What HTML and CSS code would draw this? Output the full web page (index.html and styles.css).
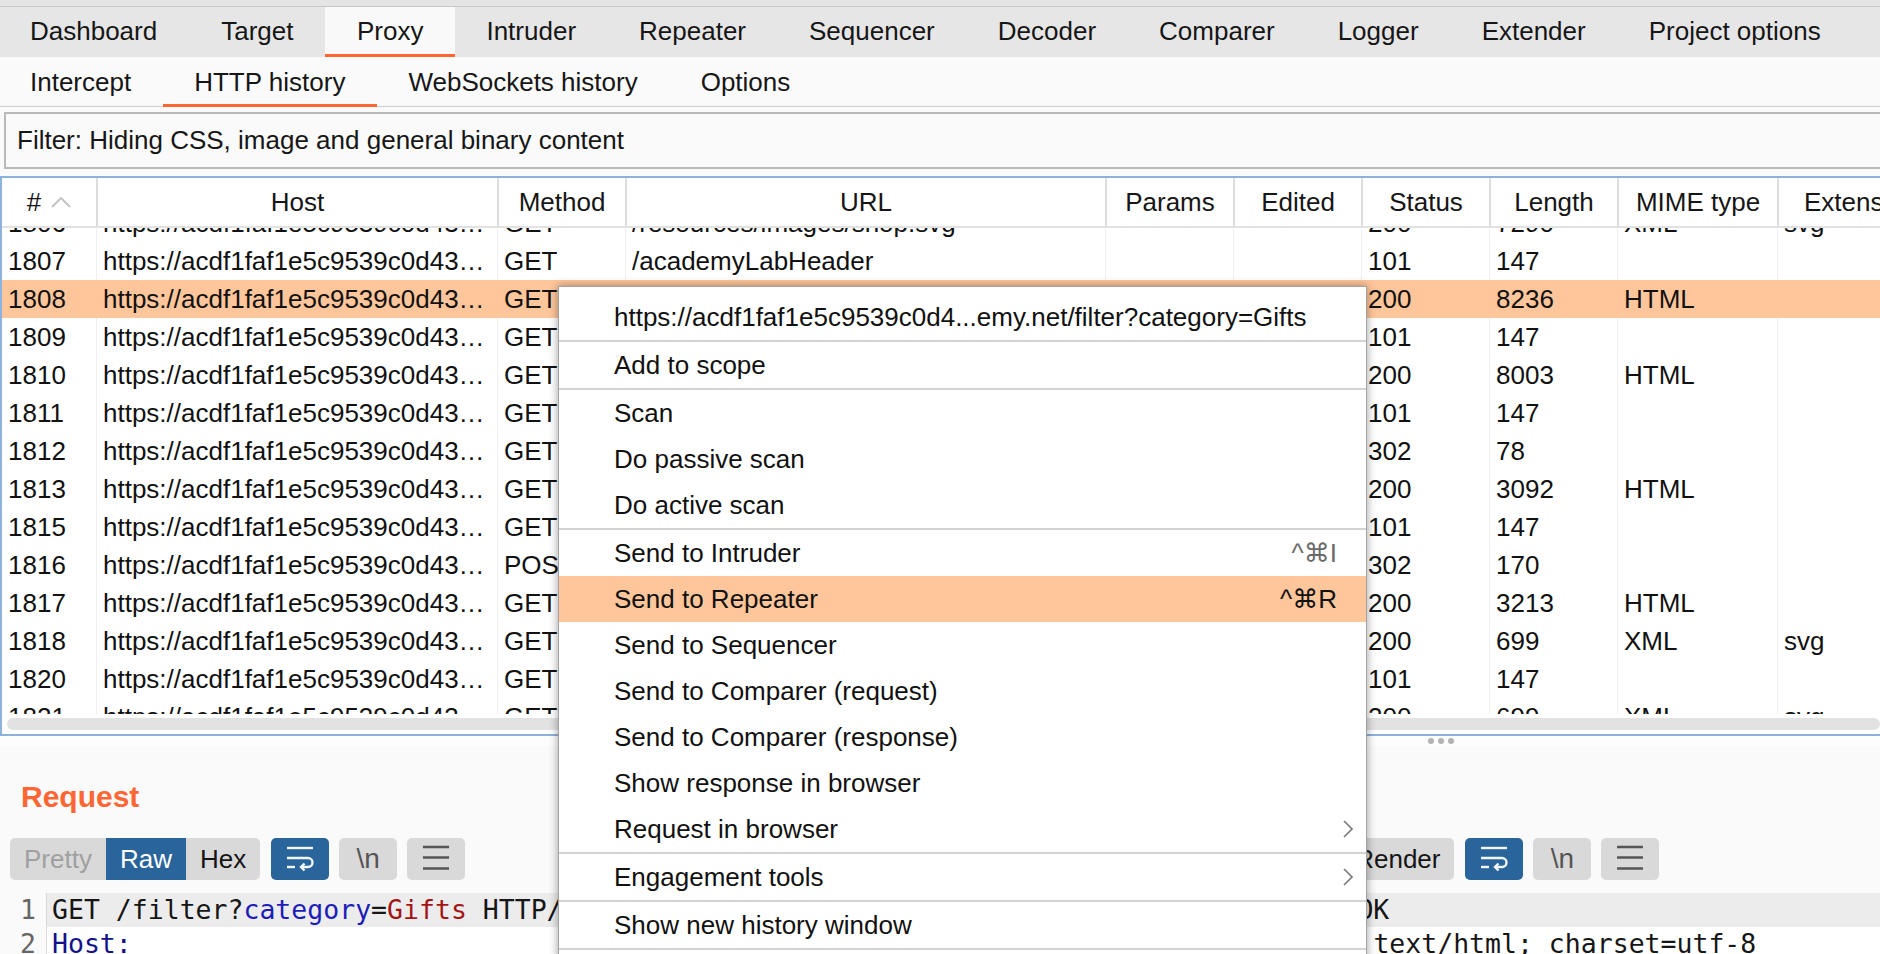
FILE: index.html
```html
<!DOCTYPE html>
<html>
<head>
<meta charset="utf-8">
<title>Burp Suite - Proxy HTTP history</title>
<link rel="stylesheet" href="styles.css">
</head>
<body>
<div class="topstrip"></div>
<nav class="tabs">
  <span class="tab">Dashboard</span>
  <span class="tab">Target</span>
  <span class="tab active">Proxy</span>
  <span class="tab">Intruder</span>
  <span class="tab">Repeater</span>
  <span class="tab">Sequencer</span>
  <span class="tab">Decoder</span>
  <span class="tab">Comparer</span>
  <span class="tab">Logger</span>
  <span class="tab">Extender</span>
  <span class="tab">Project options</span>
</nav>
<nav class="subtabs">
  <span class="subtab">Intercept</span>
  <span class="subtab active">HTTP history</span>
  <span class="subtab">WebSockets history</span>
  <span class="subtab">Options</span>
</nav>
<div class="filter">Filter: Hiding CSS, image and general binary content</div>

<section class="history">
  <div class="grid thead">
    <div class="c"><span>#</span><svg class="sort" width="20" height="11" viewBox="0 0 20 11"><polyline points="1,10 10,1 19,10" fill="none" stroke="#c4c4c4" stroke-width="2"/></svg></div>
    <div class="c">Host</div>
    <div class="c">Method</div>
    <div class="c">URL</div>
    <div class="c">Params</div>
    <div class="c">Edited</div>
    <div class="c">Status</div>
    <div class="c">Length</div>
    <div class="c">MIME type</div>
    <div class="c">Extension</div>
  </div>
  <div class="tbody">
    <div class="rows">
      <div class="grid row"><div class="c">1806</div><div class="c">https://acdf1faf1e5c9539c0d43…</div><div class="c">GET</div><div class="c">/resources/images/shop.svg</div><div class="c"></div><div class="c"></div><div class="c">200</div><div class="c">7290</div><div class="c">XML</div><div class="c">svg</div></div>
      <div class="grid row"><div class="c">1807</div><div class="c">https://acdf1faf1e5c9539c0d43…</div><div class="c">GET</div><div class="c">/academyLabHeader</div><div class="c"></div><div class="c"></div><div class="c">101</div><div class="c">147</div><div class="c"></div><div class="c"></div></div>
      <div class="grid row sel"><div class="c">1808</div><div class="c">https://acdf1faf1e5c9539c0d43…</div><div class="c">GET</div><div class="c">/filter?category=Gifts</div><div class="c"></div><div class="c"></div><div class="c">200</div><div class="c">8236</div><div class="c">HTML</div><div class="c"></div></div>
      <div class="grid row"><div class="c">1809</div><div class="c">https://acdf1faf1e5c9539c0d43…</div><div class="c">GET</div><div class="c">/academyLabHeader</div><div class="c"></div><div class="c"></div><div class="c">101</div><div class="c">147</div><div class="c"></div><div class="c"></div></div>
      <div class="grid row"><div class="c">1810</div><div class="c">https://acdf1faf1e5c9539c0d43…</div><div class="c">GET</div><div class="c">/filter?category=Pets</div><div class="c"></div><div class="c"></div><div class="c">200</div><div class="c">8003</div><div class="c">HTML</div><div class="c"></div></div>
      <div class="grid row"><div class="c">1811</div><div class="c">https://acdf1faf1e5c9539c0d43…</div><div class="c">GET</div><div class="c">/academyLabHeader</div><div class="c"></div><div class="c"></div><div class="c">101</div><div class="c">147</div><div class="c"></div><div class="c"></div></div>
      <div class="grid row"><div class="c">1812</div><div class="c">https://acdf1faf1e5c9539c0d43…</div><div class="c">GET</div><div class="c">/my-account</div><div class="c"></div><div class="c"></div><div class="c">302</div><div class="c">78</div><div class="c"></div><div class="c"></div></div>
      <div class="grid row"><div class="c">1813</div><div class="c">https://acdf1faf1e5c9539c0d43…</div><div class="c">GET</div><div class="c">/login</div><div class="c"></div><div class="c"></div><div class="c">200</div><div class="c">3092</div><div class="c">HTML</div><div class="c"></div></div>
      <div class="grid row"><div class="c">1815</div><div class="c">https://acdf1faf1e5c9539c0d43…</div><div class="c">GET</div><div class="c">/academyLabHeader</div><div class="c"></div><div class="c"></div><div class="c">101</div><div class="c">147</div><div class="c"></div><div class="c"></div></div>
      <div class="grid row"><div class="c">1816</div><div class="c">https://acdf1faf1e5c9539c0d43…</div><div class="c">POST</div><div class="c">/login</div><div class="c"></div><div class="c"></div><div class="c">302</div><div class="c">170</div><div class="c"></div><div class="c"></div></div>
      <div class="grid row"><div class="c">1817</div><div class="c">https://acdf1faf1e5c9539c0d43…</div><div class="c">GET</div><div class="c">/my-account</div><div class="c"></div><div class="c"></div><div class="c">200</div><div class="c">3213</div><div class="c">HTML</div><div class="c"></div></div>
      <div class="grid row"><div class="c">1818</div><div class="c">https://acdf1faf1e5c9539c0d43…</div><div class="c">GET</div><div class="c">/resources/images/avatarDefault.svg</div><div class="c"></div><div class="c"></div><div class="c">200</div><div class="c">699</div><div class="c">XML</div><div class="c">svg</div></div>
      <div class="grid row"><div class="c">1820</div><div class="c">https://acdf1faf1e5c9539c0d43…</div><div class="c">GET</div><div class="c">/academyLabHeader</div><div class="c"></div><div class="c"></div><div class="c">101</div><div class="c">147</div><div class="c"></div><div class="c"></div></div>
      <div class="grid row"><div class="c">1821</div><div class="c">https://acdf1faf1e5c9539c0d43…</div><div class="c">GET</div><div class="c">/resources/images/avatarDefault.svg</div><div class="c"></div><div class="c"></div><div class="c">200</div><div class="c">699</div><div class="c">XML</div><div class="c">svg</div></div>
    </div>
  </div>
  <div class="hscroll"><div class="bar"></div></div>
</section>

<div class="splitter"><i></i><i></i><i></i></div>

<div class="editors">
  <section class="panel req">
    <h2 class="ptitle">Request</h2>
    <div class="toolbar">
      <div class="seg"><span class="dim">Pretty</span><span class="on">Raw</span><span>Hex</span></div>
      <span class="ibtn on first"><svg width="58" height="42" viewBox="0 0 58 42"><g fill="none" stroke="#f2f5f9" stroke-width="2.4"><path d="M16 10H42"/><path d="M16 20H37a4.5 4.5 0 0 1 0 9H30"/><path d="M33.5 25.5L30 29l3.5 3.5"/><path d="M16 29H24"/></g></svg></span>
      <span class="ibtn nl">\n</span>
      <span class="ibtn"><svg width="58" height="42" viewBox="0 0 58 42"><path d="M16 9H42M16 19.5H42M16 30.5H42" stroke="#555" stroke-width="2.5"/></svg></span>
    </div>
    <div class="editor">
      <div class="ln cur"><span class="gut">1</span><span class="code">GET /filter?<span class="k">category</span>=<span class="v">Gifts</span> HTTP/1.1</span></div>
      <div class="ln"><span class="gut">2</span><span class="code"><span class="h">Host:</span></span></div>
      <div class="ln"><span class="gut"></span><span class="code">acdf1faf1e5c9539c0d4302800fc0054.web-security-academy.net</span></div>
    </div>
  </section>
  <section class="panel resp">
    <h2 class="ptitle">Response</h2>
    <div class="toolbar">
      <div class="seg"><span class="dim">Pretty</span><span class="on">Raw</span><span>Hex</span><span>Render</span></div>
      <span class="ibtn on first"><svg width="58" height="42" viewBox="0 0 58 42"><g fill="none" stroke="#f2f5f9" stroke-width="2.4"><path d="M16 10H42"/><path d="M16 20H37a4.5 4.5 0 0 1 0 9H30"/><path d="M33.5 25.5L30 29l3.5 3.5"/><path d="M16 29H24"/></g></svg></span>
      <span class="ibtn nl">\n</span>
      <span class="ibtn"><svg width="58" height="42" viewBox="0 0 58 42"><path d="M16 9H42M16 19.5H42M16 30.5H42" stroke="#555" stroke-width="2.5"/></svg></span>
    </div>
    <div class="editor">
      <div class="ln cur"><span class="gut wide">1</span><span class="code">HTTP/1.1 200 OK</span></div>
      <div class="ln"><span class="gut wide">2</span><span class="code"><span class="h">Content-Type:</span> text/html; charset=utf-8</span></div>
      <div class="ln"><span class="gut wide">3</span><span class="code"><span class="h">Connection:</span> close</span></div>
    </div>
  </section>
</div>

<div class="ctxmenu">
  <div class="mi">https://acdf1faf1e5c9539c0d4...emy.net/filter?category=Gifts</div>
  <div class="sep"></div>
  <div class="mi">Add to scope</div>
  <div class="sep"></div>
  <div class="mi">Scan</div>
  <div class="mi">Do passive scan</div>
  <div class="mi">Do active scan</div>
  <div class="sep"></div>
  <div class="mi">Send to Intruder<span class="kbd">^⌘I</span></div>
  <div class="mi hl">Send to Repeater<span class="kbd">^⌘R</span></div>
  <div class="mi">Send to Sequencer</div>
  <div class="mi">Send to Comparer (request)</div>
  <div class="mi">Send to Comparer (response)</div>
  <div class="mi">Show response in browser</div>
  <div class="mi">Request in browser<svg class="chev" width="10" height="18" viewBox="0 0 10 18"><polyline points="1,1 9,9 1,17" fill="none" stroke="#7a7a7a" stroke-width="1.6"/></svg></div>
  <div class="sep"></div>
  <div class="mi">Engagement tools<svg class="chev" width="10" height="18" viewBox="0 0 10 18"><polyline points="1,1 9,9 1,17" fill="none" stroke="#7a7a7a" stroke-width="1.6"/></svg></div>
  <div class="sep"></div>
  <div class="mi">Show new history window</div>
  <div class="sep"></div>
  <div class="mi">Add comment</div>
</div>
</body>
</html>
```

FILE: styles.css
```css
* { box-sizing: border-box; margin: 0; padding: 0; }

html, body {
  width: 1880px;
  height: 954px;
  overflow: hidden;
  background: #fafafa;
}

body {
  position: relative;
  font-family: "Liberation Sans", Arial, Helvetica, sans-serif;
  font-size: 26px;
  color: #161616;
}

/* ---------- top tab bars ---------- */
.topstrip {
  height: 7px;
  background: #e4e4e4;
  border-bottom: 1px solid #c7c7c7;
}

.tabs {
  display: flex;
  height: 50px;
  background: #e6e6e6;
  white-space: nowrap;
}

.tab {
  padding: 1px 31.5px 0;
  line-height: 46px;
  border-bottom: 3px solid transparent;
}
.tab:first-child { padding-left: 30px; padding-right: 32px; }
.tab:nth-child(2) { padding-left: 32px; padding-right: 32px; }
.tab.active {
  background: #f9f9f9;
  border-bottom-color: #ff6633;
}

.subtabs {
  display: flex;
  height: 50px;
  background: #fafafa;
  border-bottom: 1px solid #cdcdcd;
  white-space: nowrap;
}

.subtab {
  height: 50px;
  padding: 4px 31.5px 0;
  line-height: 43px;
  border-bottom: 3px solid transparent;
}
.subtab:first-child { padding-left: 30px; }
.subtab.active { border-bottom-color: #ff6633; }

/* ---------- filter ---------- */
.filter {
  margin: 5px 0 0 4px;
  height: 57px;
  border: 2px solid #b9b9b9;
  border-right: 0;
  padding-left: 11px;
  line-height: 53px;
  background: #fafafa;
  white-space: nowrap;
}

/* ---------- history table ---------- */
.history {
  margin-top: 7px;
  border: 2px solid #8db2de;
  border-right: 0;
  background: #fff;
  overflow: hidden;
}

.grid {
  display: grid;
  grid-template-columns: 94px 401px 128px 480px 128px 128px 128px 128px 160px 166px;
  width: 1941px;
}

.thead {
  height: 50px;
  border-bottom: 2px solid #e2e2e2;
  background: #fff;
}
.thead .c {
  display: flex;
  align-items: center;
  justify-content: center;
  gap: 10px;
  line-height: 48px;
  border-left: 2px solid #dcdcdc;
  white-space: nowrap;
  overflow: hidden;
}
.thead .c:first-child { border-left: 0; }

.tbody {
  height: 486px;
  overflow: hidden;
}
.rows { margin-top: -24px; }

.row {
  height: 38px;
  line-height: 38px;
  color: #111;
}
.row .c {
  padding-left: 6px;
  border-left: 1px solid #efefef;
  white-space: nowrap;
  overflow: hidden;
}
.row .c:first-child { border-left: 0; }
.row.sel { background: #ffc69b; }
.row.sel .c { border-left-color: transparent; }

.hscroll {
  height: 20px;
  padding: 4px 0 0 5px;
}
.hscroll .bar {
  height: 12px;
  border-radius: 6px;
  background: #e2e2e2;
}

/* ---------- splitter ---------- */
.splitter {
  display: flex;
  gap: 4px;
  height: 10px;
  padding: 2px 0 0 1428px;
  background: #fdfdfd;
}
.splitter i {
  width: 6px;
  height: 6px;
  border-radius: 50%;
  background: #b3b3b3;
}

/* ---------- request / response ---------- */
.editors { display: flex; }

.panel.req { width: 1075px; }
.panel.resp { flex: 1; margin-left: 6px; }

.ptitle {
  padding: 33px 0 0 21px;
  font-size: 30px;
  line-height: 36px;
  font-weight: bold;
  color: #ff6633;
}

.toolbar {
  display: flex;
  height: 42px;
  margin: 23px 0 0 10px;
}

.seg {
  display: flex;
  background: #d9d9d9;
  border-radius: 5px;
  overflow: hidden;
}
.seg span {
  padding: 0 14px;
  line-height: 42px;
  color: #151515;
}
.seg .dim { color: #a0a0a0; }
.seg .on { background: #29649a; color: #fff; }

.ibtn {
  display: flex;
  align-items: center;
  justify-content: center;
  width: 58px;
  height: 42px;
  margin-left: 10px;
  border-radius: 5px;
  background: #d9d9d9;
}
.ibtn.first { margin-left: 11px; }
.ibtn.on { background: #29649a; }
.ibtn.nl {
  font-size: 28px;
  color: #555;
  line-height: 42px;
}

.editor {
  margin-top: 13px;
  background: #fff;
  font-family: "DejaVu Sans Mono", "Liberation Mono", monospace;
  font-size: 26.5px;
}

.ln {
  display: flex;
  height: 34px;
  line-height: 34px;
}
.gut {
  flex: none;
  width: 47px;
  padding-right: 10px;
  text-align: right;
  color: #666;
  border-right: 1px solid #d9d9d9;
  background: #fafafa;
}
.gut.wide { width: 64px; }
.code {
  flex: 1;
  padding-left: 5px;
  white-space: pre;
  color: #161616;
}
.ln.cur .code { background: #ececec; }

.k { color: #1d1db8; }
.v { color: #a31515; }
.h { color: #12128c; }

/* ---------- context menu ---------- */
.ctxmenu {
  position: absolute;
  left: 558px;
  top: 286px;
  width: 809px;
  padding-top: 7px;
  background: #fff;
  border: 1px solid #a3a3a3;
  box-shadow: 0 0 9px rgba(0, 0, 0, 0.38);
}

.mi {
  display: flex;
  align-items: center;
  height: 46px;
  padding: 0 29px 0 55px;
  white-space: nowrap;
  color: #111;
}
.mi.hl { background: #ffc69b; }

.kbd {
  margin-left: auto;
  font-family: "Liberation Sans", "DejaVu Sans", sans-serif;
  color: #6b6b6b;
}
.mi.hl .kbd { color: #111; }

.chev {
  margin-left: auto;
  margin-right: -16px;
}

.sep {
  height: 2px;
  background: #d2d2d2;
}
```
